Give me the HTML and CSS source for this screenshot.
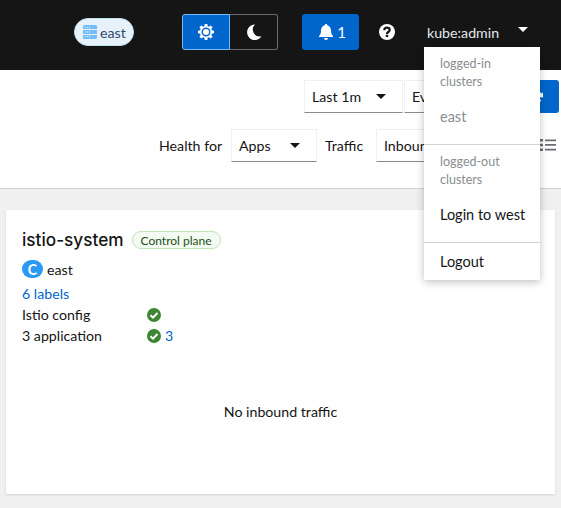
FILE: index.html
```html
<!DOCTYPE html>
<html>
<head>
    <title>Overview</title>
    <link rel="stylesheet" href="styles.css">
</head>
<body>
<header class="masthead">
    <span class="cluster-pill">
        <svg class="cluster-icon" viewBox="0 0 16 16">
            <path fill="#73bcf7" d="M1 2.500Q1 1 2.500 1h11Q15 1 15 2.500V5H1zM1 6h14v4H1zM1 11h14v2.500Q15 15 13.500 15h-11Q1 15 1 13.500z"/>
            <path fill="#e7f1fa" d="M3 3h1v1H3zm2 0h1v1H5zm2 0h1v1H7zM3 7.500h1v1H3zm2 0h1v1H5zm2 0h1v1H7zM3 12h1v1H3zm2 0h1v1H5zm2 0h1v1H7z"/>
        </svg>
        east
    </span>
    <div class="theme-toggle">
        <button class="theme-btn theme-btn-on">
            <svg class="icon-16" viewBox="0 0 16 16">
                <path fill="#fff" fill-rule="evenodd" d="M6.700 0h2.600l.4 2.200 1.200.5 1.900-1.300 1.800 1.800-1.300 1.900.5 1.200 2.200.4v2.600l-2.200.4-.5 1.200 1.300 1.900-1.800 1.800-1.900-1.300-1.200.5-.4 2.200H6.700l-.4-2.200-1.200-.5-1.900 1.300-1.800-1.800 1.300-1.900-.5-1.200L0 9.300V6.700l2.200-.4.500-1.200-1.300-1.900 1.800-1.800 1.900 1.300 1.200-.5zM8 3.500a4.500 4.500 0 1 0 0 9 4.500 4.500 0 0 0 0-9z"/>
                <circle fill="#fff" cx="8" cy="8" r="3"/>
            </svg>
        </button>
        <button class="theme-btn">
            <svg class="icon-16" viewBox="0 0 16 16">
                <path fill="#fff" d="M9 0.500a7.800 7.800 0 1 0 6.600 11.800A7 7 0 0 1 9 0.500z"/>
            </svg>
        </button>
    </div>
    <button class="notify-btn">
        <svg class="icon-16" viewBox="0 0 16 16">
            <path fill="#fff" d="M8 0a1.300 1.300 0 0 1 1.300 1.300C11.800 2 13 4 13 6.500c0 3.500 1 4.500 2 5.500v1H1v-1c1-1 2-2 2-5.500C3 4 4.200 2 6.700 1.300A1.300 1.300 0 0 1 8 0zM6 14h4a2 2 0 0 1-4 0z"/>
        </svg>
        1
    </button>
    <svg class="help-icon" viewBox="0 0 16 16">
        <circle fill="#fff" cx="8" cy="8" r="8"/>
        <path fill="none" stroke="#151515" stroke-width="2.200" d="M5.300 6.200C5.300 4.600 6.500 3.700 8 3.700c1.600 0 2.700 1 2.700 2.300 0 2-2.700 2-2.700 3.900"/>
        <rect fill="#151515" x="6.800" y="10.800" width="2.400" height="2.200"/>
    </svg>
    <span class="user-name">kube:admin</span>
    <span class="caret caret-white"></span>
</header>

<section class="toolbar">
    <div class="toolbar-row">
        <div class="select select-time">Last 1m <span class="caret"></span></div>
        <div class="select select-refresh">Every 15s <span class="caret"></span></div>
        <button class="refresh-btn">
            <svg class="refresh-icon" viewBox="0 0 16 16">
                <path fill="none" stroke="#fff" stroke-width="2.400" d="M2 9.500A6 6 0 0 0 13 11M14 6.500A6 6 0 0 0 3 5"/>
                <path fill="#fff" d="M16 8.500V2.500l-5.500 5.500zM0 7.500v6l5.500-5.500z"/>
            </svg>
        </button>
    </div>
    <div class="toolbar-row toolbar-row-filters">
        <span class="filter-label filter-health">Health for</span>
        <div class="select select-health">Apps <span class="caret"></span></div>
        <span class="filter-label filter-traffic">Traffic</span>
        <div class="select select-traffic">Inbound <span class="caret"></span></div>
        <svg class="list-icon" viewBox="0 0 16 12">
            <path fill="#6a6e73" d="M0 0h3v2.500H0zM5 .5h11v1.700H5zM0 4.700h3v2.500H0zM5 5.100h11v1.700H5zM0 9.400h3v2.500H0zM5 9.800h11v1.700H5z"/>
        </svg>
    </div>
</section>

<main class="content">
    <article class="card">
        <div class="card-title">
            <h2>istio-system</h2>
            <span class="label-green">Control plane</span>
        </div>
        <div class="cluster-row">
            <span class="badge-c">C</span>
            east
        </div>
        <a class="link labels-link" href="#">6 labels</a>
        <div class="stat-row">
            <span class="stat-name">Istio config</span>
            <svg class="check" viewBox="0 0 14 14">
                <circle fill="#3e8635" cx="7" cy="7" r="7"/>
                <path fill="none" stroke="#fff" stroke-width="2" d="M3.500 7.200l2.500 2.400 4.500-4.600"/>
            </svg>
        </div>
        <div class="stat-row">
            <span class="stat-name">3 application</span>
            <svg class="check" viewBox="0 0 14 14">
                <circle fill="#3e8635" cx="7" cy="7" r="7"/>
                <path fill="none" stroke="#fff" stroke-width="2" d="M3.500 7.200l2.500 2.400 4.500-4.600"/>
            </svg>
            <a class="link stat-count" href="#">3</a>
        </div>
        <p class="no-traffic">No inbound traffic</p>
    </article>
</main>

<nav class="user-menu">
    <div class="menu-section menu-section-in">
        <div class="menu-heading">logged-in clusters</div>
        <div class="menu-item menu-item-off">east</div>
    </div>
    <div class="menu-section menu-section-out">
        <div class="menu-heading">logged-out clusters</div>
        <div class="menu-item">Login to west</div>
    </div>
    <div class="menu-section menu-section-logout">
        <div class="menu-item">Logout</div>
    </div>
</nav>
</body>
</html>
```

FILE: styles.css
```css
* {
    box-sizing: border-box;
}

html, body {
    height: 100%;
}

body {
    margin: 0;
    position: relative;
    overflow: hidden;
    display: flex;
    flex-direction: column;
    font-family: "Lato", Arial, sans-serif;
    font-size: 14.200px;
    color: #151515;
    background-color: #f0f0f0;
}

button {
    font-family: inherit;
    border: none;
    padding: 0;
    color: white;
}

.caret {
    width: 0;
    height: 0;
    border-left: 5px solid transparent;
    border-right: 5px solid transparent;
    border-top: 5px solid #151515;
}

.caret-white {
    border-top-color: white;
    margin-left: 19px;
    margin-top: -5px;
}

.icon-16 {
    width: 16px;
    height: 16px;
}

/* masthead */
.masthead {
    height: 70px;
    flex: none;
    display: flex;
    align-items: center;
    padding-left: 74px;
    padding-bottom: 6px;
    background-color: #151515;
}

.cluster-pill {
    width: 60px;
    height: 28px;
    display: flex;
    align-items: center;
    gap: 2px;
    padding-left: 7px;
    border: 1px solid #bee1f4;
    border-radius: 14px;
    background-color: #e7f1fa;
    color: #2b4a6b;
}

.cluster-icon {
    width: 16px;
    height: 16px;
}

.theme-toggle {
    margin-left: 48px;
    width: 96px;
    height: 36px;
    display: flex;
}

.theme-btn {
    width: 48px;
    height: 36px;
    display: flex;
    align-items: center;
    justify-content: center;
    background-color: #151515;
    border: 1px solid #6a6e73;
    border-left: none;
    border-radius: 0 3px 3px 0;
}

.theme-btn-on {
    background-color: #06c;
    border: 1px solid #73bcf7;
    border-radius: 3px 0 0 3px;
}

.notify-btn {
    margin-left: 24px;
    width: 57px;
    height: 36px;
    display: flex;
    align-items: center;
    justify-content: center;
    gap: 3px;
    padding-left: 3px;
    font-size: 15px;
    background-color: #06c;
    border-radius: 3px;
}

.help-icon {
    margin-left: 20px;
    width: 16px;
    height: 16px;
}

.user-name {
    width: 72px;
    margin-left: 32px;
    white-space: nowrap;
    color: #e0e8f0;
}

/* toolbar */
.toolbar {
    height: 119px;
    flex: none;
    padding-top: 10px;
    background-color: white;
    border-bottom: 1px solid #d2d2d2;
    overflow: hidden;
}

.toolbar-row {
    display: flex;
    padding-left: 304px;
}

.toolbar-row-filters {
    margin-top: 16px;
    padding-left: 159px;
    align-items: center;
}

.select {
    height: 33px;
    flex: none;
    display: flex;
    align-items: center;
    justify-content: space-between;
    padding: 0 16px 0 7px;
    border: 1px solid #f0f0f0;
    border-bottom-color: #8a8d90;
}

.select-time {
    width: 99px;
    margin-right: 1px;
}

.select-refresh {
    width: 130px;
}

.refresh-btn {
    width: 25px;
    height: 33px;
    flex: none;
    background-color: #06c;
    border-radius: 0 3px 3px 0;
}

.refresh-icon {
    display: block;
    width: 14px;
    height: 14px;
    margin-left: -5px;
}

.filter-health {
    width: 72px;
}

.filter-traffic {
    width: 51px;
    margin-left: 8px;
}

.select-health {
    width: 86px;
}

.select-traffic {
    width: 140px;
}

.list-icon {
    position: absolute;
    left: 540px;
    top: 139px;
    width: 16px;
    height: 12px;
}

/* card */
.content {
    flex: 1;
    padding: 21px 6px 15px;
}

.card {
    height: 284px;
    padding: 20px 16px 0;
    background-color: white;
    box-shadow: 0 1px 2px rgba(3, 3, 3, 0.12);
}

.card-title {
    display: flex;
    align-items: center;
    gap: 8px;
}

h2 {
    margin: 0;
    font-family: "Inter", Arial, sans-serif;
    font-size: 17.200px;
    font-weight: 500;
    line-height: 20px;
}

.label-green {
    height: 18px;
    padding: 0 8px;
    display: flex;
    align-items: center;
    font-size: 12px;
    border: 1px solid #bde5b8;
    border-radius: 9px;
    background-color: #f3faf2;
    color: #1e4f18;
}

.cluster-row {
    margin-top: 9px;
    height: 20px;
    display: flex;
    align-items: center;
    gap: 4px;
}

.badge-c {
    width: 21px;
    height: 18px;
    display: flex;
    align-items: center;
    justify-content: center;
    border-radius: 9px;
    background-color: #2b9af3;
    color: white;
    font-weight: 700;
}

.link {
    color: #06c;
    text-decoration: none;
}

.labels-link {
    display: block;
    margin: 5px 0 1px;
    line-height: 19px;
}

.stat-row {
    height: 21px;
    display: flex;
    align-items: center;
}

.stat-name {
    width: 125px;
}

.check {
    width: 14px;
    height: 14px;
}

.stat-count {
    margin-left: 4px;
}

.no-traffic {
    margin: 57px 0 0;
    text-align: center;
}

/* user dropdown */
.user-menu {
    position: absolute;
    left: 424px;
    top: 47px;
    width: 116px;
    height: 233px;
    background-color: white;
    box-shadow: 0 2px 8px rgba(3, 3, 3, 0.25);
}

.menu-section {
    padding: 0 16px;
    border-bottom: 1px solid #d2d2d2;
}

.menu-section-in {
    height: 98px;
    padding-top: 8px;
}

.menu-section-out {
    height: 98px;
    padding-top: 8px;
}

.menu-section-logout {
    border-bottom: none;
    padding-top: 8px;
}

.menu-heading {
    font-size: 12.500px;
    line-height: 18px;
    color: #8a8d90;
}

.menu-item {
    margin-top: 17px;
    line-height: 18px;
    font-size: 14.500px;
    white-space: nowrap;
}

.menu-section-logout .menu-item {
    margin-top: 2px;
}

.menu-item-off {
    color: #8a8d90;
}
```
